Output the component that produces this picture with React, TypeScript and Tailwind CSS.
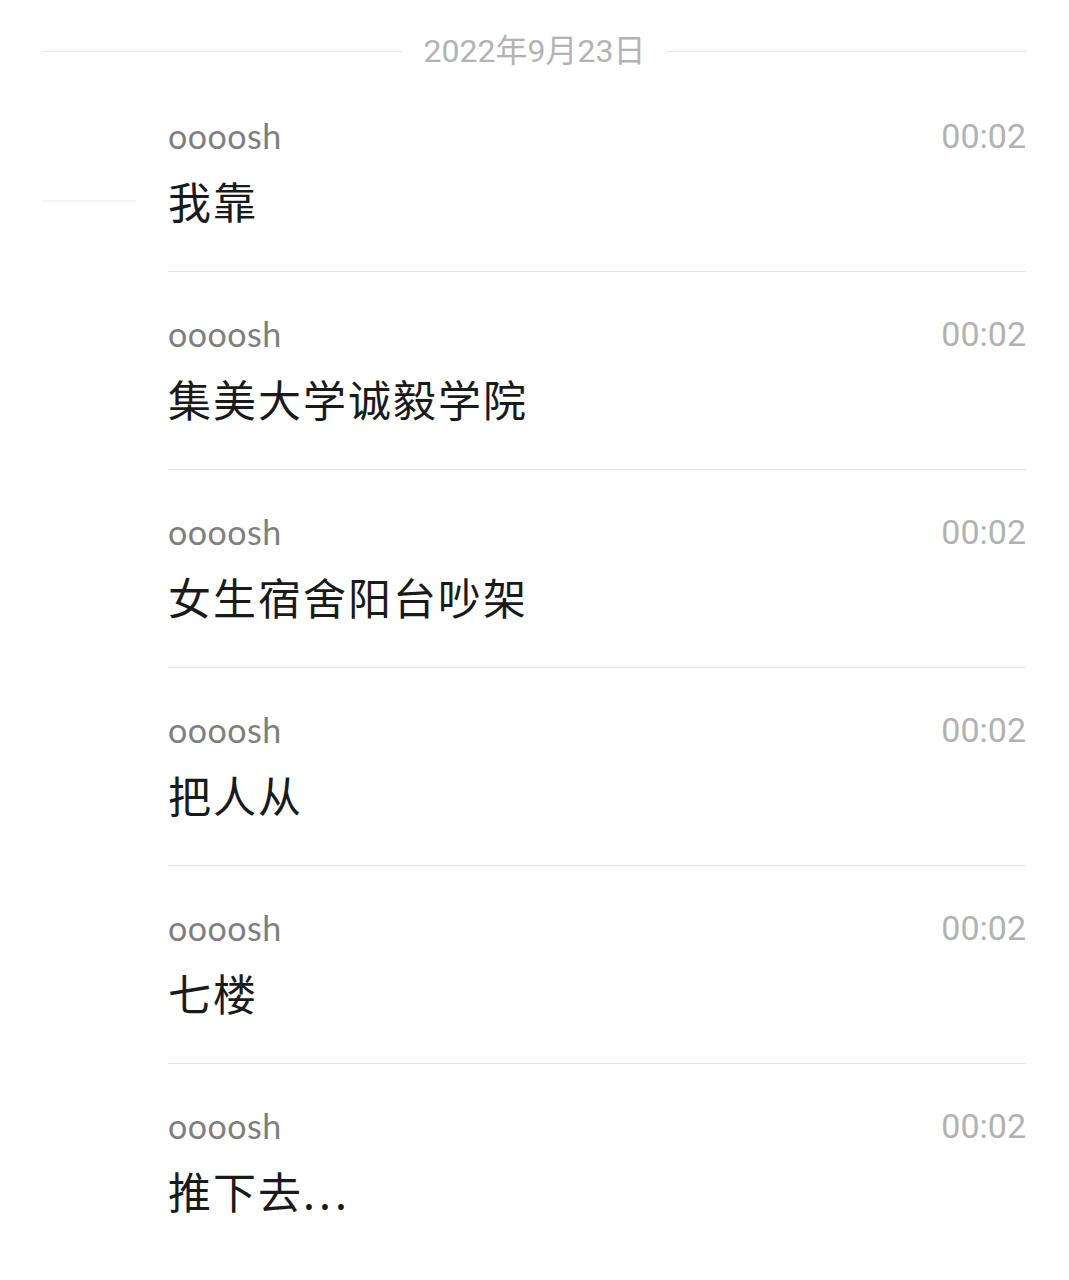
const messages = [
  "我靠",
  "集美大学诚毅学院",
  "女生宿舍阳台吵架",
  "把人从",
  "七楼",
  "推下去",
];

const cjk = { fontFamily: '"Noto Sans CJK SC", "Noto Sans", sans-serif' };
const latin = { fontFamily: 'Lato, "Noto Sans", sans-serif' };
const digits = { fontFamily: 'Roboto, "Noto Sans CJK SC", sans-serif' };

export default function App() {
  return (
    <div className="w-[1069px] h-[1280px] bg-white overflow-hidden">
      <div className="h-[74px] pt-[34px] px-[42px] flex items-start gap-[22px]">
        <div className="flex-1 h-[34px] flex items-center">
          <div className="w-full h-px bg-[#e8e8e8]" />
        </div>
        <span className="text-[32px] leading-[34px] text-[#b3b3b3]" style={digits}>
          2022年9月23日
        </span>
        <div className="flex-1 h-[34px] flex items-center">
          <div className="w-full h-px bg-[#e8e8e8]" />
        </div>
      </div>

      {messages.map((text, i) => (
        <div key={i} className="flex h-[198px]">
          <div className="w-[168px] shrink-0 pt-[126px]">
            {i === 0 && <div className="ml-[42px] w-[94px] h-[2px] bg-[#f3f3f3]" />}
          </div>
          <div
            className={
              i === messages.length - 1
                ? "flex-1 mr-[43px] pt-[42px]"
                : "flex-1 mr-[43px] border-b border-[#e6e6e6] pt-[42px]"
            }
          >
            <div className="flex items-center justify-between h-[40px]">
              <span className="text-[34px] leading-[40px] tracking-[0.5px] text-[#7f7f7f]" style={latin}>
                oooosh
              </span>
              <span className="text-[34px] leading-[40px] text-[#b2b2b2]" style={digits}>
                00:02
              </span>
            </div>
            <div className="mt-[16px] text-[43px] leading-[56px] tracking-[2px] text-[#1a1a1a]" style={cjk}>
              {text}
              {i === messages.length - 1 && <span className="tracking-[4px]">...</span>}
            </div>
          </div>
        </div>
      ))}
    </div>
  );
}
